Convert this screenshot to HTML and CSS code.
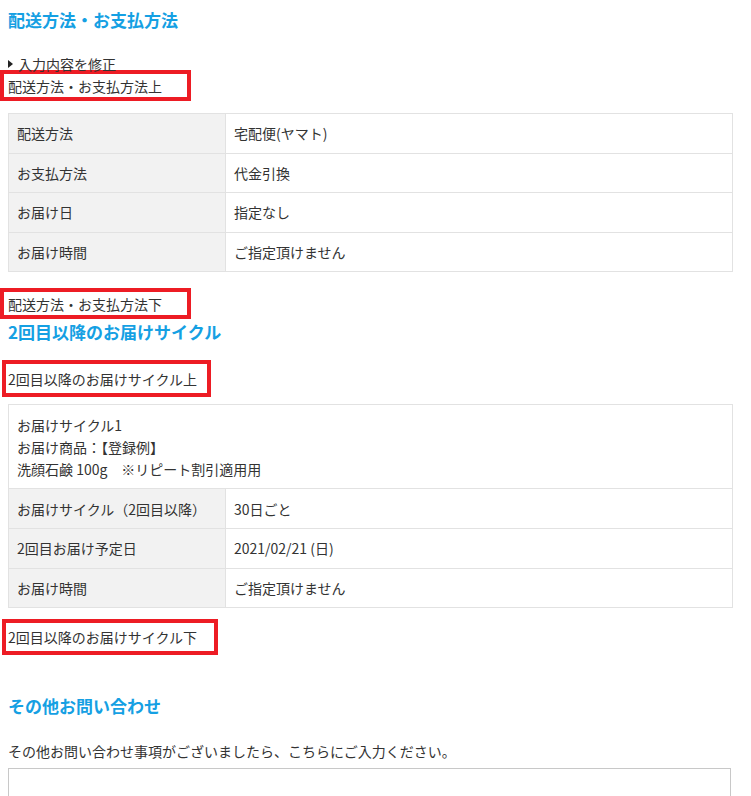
FILE: index.html
```html
<!DOCTYPE html>
<html lang="ja">
<head>
<meta charset="utf-8">
<title>配送方法・お支払方法</title>
<link rel="stylesheet" href="styles.css">
</head>
<body>
<div class="page">
  <h2 class="sec-title first">配送方法・お支払方法</h2>
  <a class="edit-link" href="#"><span class="tri"></span>入力内容を修正</a>
  <div class="slot slot-a">配送方法・お支払方法上</div>
  <table class="info">
    <tr><th>配送方法</th><td>宅配便(ヤマト)</td></tr>
    <tr><th>お支払方法</th><td>代金引換</td></tr>
    <tr><th>お届け日</th><td>指定なし</td></tr>
    <tr><th>お届け時間</th><td>ご指定頂けません</td></tr>
  </table>
  <div class="slot slot-b">配送方法・お支払方法下</div>
  <h2 class="sec-title second">2回目以降のお届けサイクル</h2>
  <div class="slot slot-c">2回目以降のお届けサイクル上</div>
  <table class="info">
    <tr><td class="multi" colspan="2">お届けサイクル1<br>お届け商品：【登録例】<br>洗顔石鹸 100g　※リピート割引適用用</td></tr>
    <tr><th>お届けサイクル（2回目以降）</th><td>30日ごと</td></tr>
    <tr><th>2回目お届け予定日</th><td>2021/02/21 (日)</td></tr>
    <tr><th>お届け時間</th><td>ご指定頂けません</td></tr>
  </table>
  <div class="slot slot-d">2回目以降のお届けサイクル下</div>
  <h2 class="sec-title third">その他お問い合わせ</h2>
  <p class="note">その他お問い合わせ事項がございましたら、こちらにご入力ください。</p>
  <textarea class="inquiry"></textarea>
</div>
</body>
</html>
```
FILE: styles.css
```css
html, body {
  margin: 0;
  padding: 0;
  background: #fff;
}
body {
  font-family: "Noto Sans CJK JP", "Noto Sans", sans-serif;
  font-size: 14px;
  color: #333;
  overflow: hidden;
}
.page {
  padding: 0 8px;
}
.sec-title {
  margin: 0;
  font-size: 17px;
  font-weight: bold;
  line-height: 24px;
  color: #15a0e3;
}
.sec-title.first {
  padding-top: 8px;
}
.edit-link {
  display: flex;
  align-items: center;
  gap: 5px;
  margin-top: 22px;
  height: 20px;
  color: #333;
  text-decoration: none;
  line-height: 20px;
}
.tri {
  width: 0;
  height: 0;
  border-top: 4px solid transparent;
  border-bottom: 4px solid transparent;
  border-left: 5px solid #222;
}
.slot {
  box-sizing: border-box;
  border: 4px solid #ed1c24;
  display: flex;
  align-items: center;
  line-height: 20px;
  background: #fff;
}
.slot-a {
  margin: -4px 0 0 -8px;
  width: 191px;
  height: 31px;
  padding-left: 4px;
}
.slot-b {
  margin: 16px 0 0 -8px;
  width: 191px;
  height: 31px;
  padding-left: 4px;
}
.slot-c {
  margin: 16px 0 0 -6px;
  width: 209px;
  height: 37px;
  padding-left: 2px;
}
.slot-d {
  margin: 11px 0 0 -6px;
  width: 216px;
  height: 36px;
  padding-left: 2px;
}
.info {
  width: 725px;
  border-collapse: collapse;
  margin-top: 12px;
}
.slot-c + .info {
  margin-top: 7px;
}
.info th,
.info td {
  border: 1px solid #e2e2e2;
  height: 38.6px;
  padding: 0 8px;
  text-align: left;
  font-weight: normal;
  line-height: 20px;
  vertical-align: middle;
}
.info th {
  width: 200px;
  background: #f2f2f2;
}
.info td.multi {
  height: auto;
  padding: 9px 8px 8px;
  line-height: 22px;
  background: #fff;
}
.second {
  margin-top: 1px;
}
.third {
  margin-top: 39px;
}
.note {
  margin: 23px 0 0;
  line-height: 20px;
}
.inquiry {
  display: block;
  box-sizing: border-box;
  margin-top: 7px;
  width: 723px;
  height: 120px;
  border: 1px solid #c8c8c8;
  resize: none;
}
```
